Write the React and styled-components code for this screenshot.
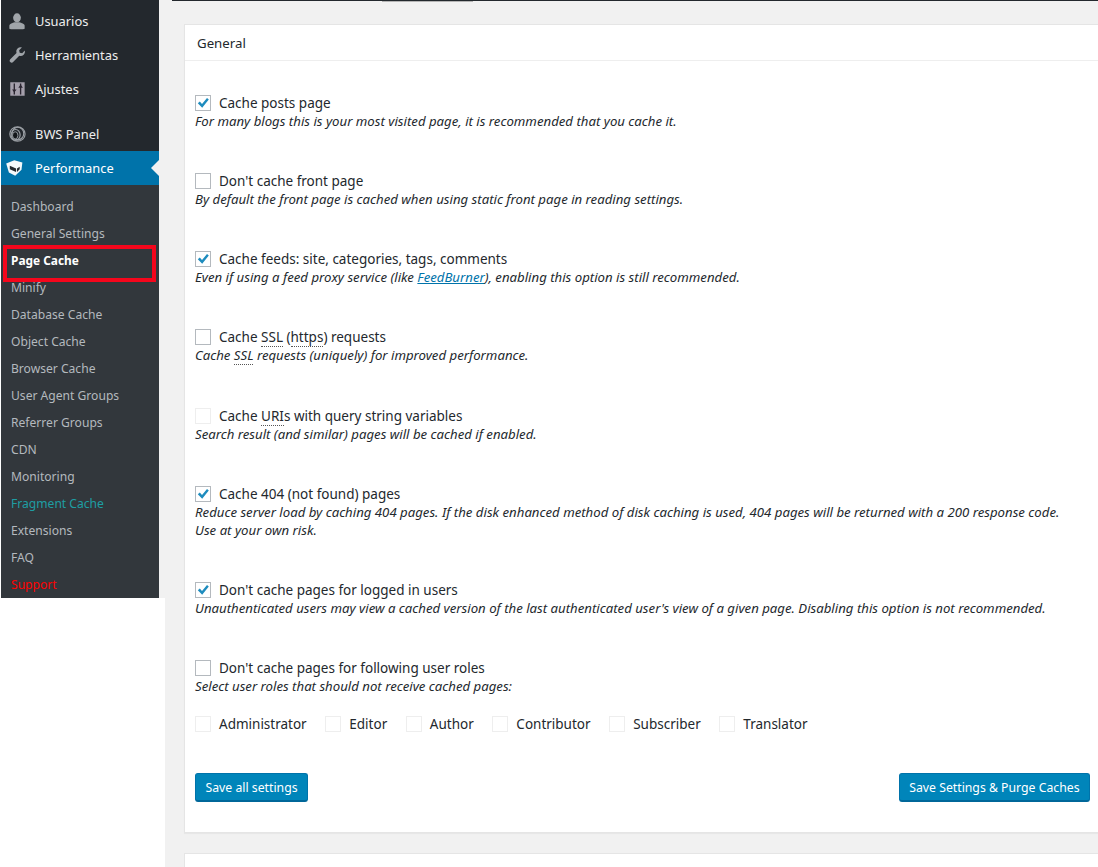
import React from "react";
import styled, { createGlobalStyle } from "styled-components";

const GlobalStyle = createGlobalStyle`
  html, body {
    margin: 0;
    padding: 0;
    background: #fff;
    font-family: "Noto Sans", "Open Sans", sans-serif;
    color: #23282d;
  }
  * { box-sizing: border-box; }
`;

const Page = styled.div`
  width: 1098px;
  height: 867px;
  display: flex;
  overflow: hidden;
  position: relative;
`;

const Sidebar = styled.aside`
  width: 165px;
  padding-left: 1px;
  flex: none;
`;

const SideInner = styled.div`
  width: 158px;
  padding-top: 4px;
  background: #23282d;
  box-shadow: 6px 0 0 #f1f1f1;
`;

const MenuItem = styled.div`
  height: 34px;
  display: flex;
  align-items: center;
  padding-left: 7px;
  gap: 9px;
  position: relative;
  font-size: 12.9px;
  background: ${(p) => (p.$active ? "#0073aa" : "transparent")};
  color: ${(p) => (p.$active ? "#fff" : "#eee")};
  margin-top: ${(p) => p.$gap || 0}px;
`;

const Notch = styled.span`
  position: absolute;
  right: 0;
  top: 9px;
  border: 8px solid transparent;
  border-right-color: #f1f1f1;
  border-left: 0;
`;

const IconBox = styled.svg`
  width: 18px;
  height: 18px;
  flex: none;
  display: block;
  overflow: visible;
`;

const SubMenu = styled.div`
  background: #32373c;
  height: 413px;
  padding-top: 8px;
`;

const SubItem = styled.div`
  height: 27px;
  display: flex;
  align-items: center;
  padding-left: 10px;
  padding-bottom: ${(p) => (p.$current ? "2px" : "0")};
  font-size: ${(p) => (p.$current ? "11.9px" : "12.1px")};
  color: ${(p) => p.$color || "#b4b9be"};
  font-weight: ${(p) => (p.$current ? 700 : 400)};
  position: relative;
`;

const RedFrame = styled.span`
  position: absolute;
  left: 2px;
  top: -2px;
  width: 153px;
  height: 37px;
  border: 4px solid #f5061c;
`;

const Main = styled.main`
  flex: 1;
  min-width: 0;
  background: #f1f1f1;
  padding: 24px 0 0 19px;
  position: relative;
`;

const TopLine = styled.span`
  position: absolute;
  left: 7px;
  right: 0;
  top: 0;
  height: 1px;
  background: #23282d;
`;

const TopTab = styled.span`
  position: absolute;
  left: 217px;
  top: 1px;
  width: 91px;
  height: 1px;
  background: #b5b5b5;
`;

const Card = styled.section`
  width: 930px;
  background: #fff;
  border: 1px solid #e5e5e5;
  border-right: 0;
  box-shadow: 0 1px 1px rgba(0, 0, 0, 0.04);
`;

const CardHead = styled.h2`
  margin: 0;
  height: 36px;
  display: flex;
  align-items: center;
  padding-left: 12px;
  font-size: 13.25px;
  font-weight: 400;
  color: #23282d;
  border-bottom: 1px solid #eee;
`;

const CardBody = styled.div`
  padding: 33px 0 0 10px;
  height: 771px;
`;

const Option = styled.div`
  height: 78px;
  &:nth-child(4) { height: 79px; }
  &:nth-child(6) { height: 96px; }
`;

const LabelRow = styled.div`
  display: flex;
  align-items: center;
  height: 18px;
  gap: 8px;
`;

const Check = styled.span`
  width: 16px;
  height: 16px;
  flex: none;
  border: 1px solid ${(p) => (p.$disabled ? "#eeeeee" : "#b4b9be")};
  background: #fff;
  display: block;
  position: relative;
`;

const Tick = styled.svg`
  position: absolute;
  left: 0;
  top: 0;
  width: 14px;
  height: 14px;
`;

const LabelText = styled.span`
  font-size: 13.5px;
  color: #23282d;
`;

const Abbr = styled.span`
  border-bottom: 1px dotted #555;
`;

const Note = styled.div`
  font-size: 13.2px;
  font-style: italic;
  color: #23282d;
  line-height: 18px;
  width: 870px;
`;

const NoteLink = styled.a`
  color: #0073aa;
  text-decoration: underline;
`;

const Roles = styled.div`
  display: flex;
  margin-top: 20px;
  height: 58px;
`;

const Role = styled.div`
  display: flex;
  align-items: center;
  gap: 8px;
  height: 18px;
  margin-right: 18.6px;
`;

const Actions = styled.div`
  display: flex;
  justify-content: space-between;
  width: 895px;
`;

const Button = styled.button`
  height: 29px;
  padding: 0 9.5px;
  font: inherit;
  font-size: 12.25px;
  color: #fff;
  background: #0085ba;
  border: 1px solid #0073aa;
  border-bottom-width: 2px;
  border-bottom-color: #006799;
  border-radius: 3px;
`;

const NextCard = styled.section`
  width: 930px;
  height: 40px;
  margin-top: 20px;
  background: #fff;
  border: 1px solid #e5e5e5;
  border-right: 0;
`;

const options = [
  { checked: true, label: "Cache posts page", note: "For many blogs this is your most visited page, it is recommended that you cache it." },
  { label: "Don't cache front page", note: "By default the front page is cached when using static front page in reading settings." },
  {
    checked: true,
    label: "Cache feeds: site, categories, tags, comments",
    note: (
      <>
        Even if using a feed proxy service (like <NoteLink href="#">FeedBurner</NoteLink>), enabling this option is still recommended.
      </>
    ),
  },
  {
    label: (
      <>
        Cache <Abbr>SSL</Abbr> (<Abbr>https</Abbr>) requests
      </>
    ),
    note: (
      <>
        Cache <Abbr>SSL</Abbr> requests (uniquely) for improved performance.
      </>
    ),
  },
  {
    disabled: true,
    label: (
      <>
        Cache <Abbr>URI</Abbr>s with query string variables
      </>
    ),
    note: "Search result (and similar) pages will be cached if enabled.",
  },
  {
    checked: true,
    label: "Cache 404 (not found) pages",
    note: "Reduce server load by caching 404 pages. If the disk enhanced method of disk caching is used, 404 pages will be returned with a 200 response code. Use at your own risk.",
  },
  { checked: true, label: "Don't cache pages for logged in users", note: "Unauthenticated users may view a cached version of the last authenticated user's view of a given page. Disabling this option is not recommended." },
];

const subItems = [
  { name: "Dashboard" },
  { name: "General Settings" },
  { name: "Page Cache", current: true },
  { name: "Minify" },
  { name: "Database Cache" },
  { name: "Object Cache" },
  { name: "Browser Cache" },
  { name: "User Agent Groups" },
  { name: "Referrer Groups" },
  { name: "CDN" },
  { name: "Monitoring" },
  { name: "Fragment Cache", color: "#1e9ea3" },
  { name: "Extensions" },
  { name: "FAQ" },
  { name: "Support", color: "#ff0000" },
];

const roles = ["Administrator", "Editor", "Author", "Contributor", "Subscriber", "Translator"];

const UserIcon = () => (
  <IconBox viewBox="0 0 20 20">
    <ellipse cx="10" cy="6.500" rx="4.300" ry="5" fill="#a0a5aa" />
    <path fill="#a0a5aa" d="M1.500 18.500v-3.200c0-2 3.500-3.100 6-3.800h5c2.500.7 6 1.800 6 3.800v3.200c-1 .6-2.500.7-4 .7H5.500c-1.500 0-3-.1-4-.7z" />
  </IconBox>
);

const WrenchIcon = () => (
  <IconBox viewBox="0 0 20 20">
    <path fill="#a0a5aa" d="M18.600 4.900c.5 1.700.1 3.500-1.200 4.800-1.300 1.300-3.200 1.700-4.900 1.100L5.700 17.800c-.9.900-2.300.9-3.200 0s-.9-2.300 0-3.200l7-6.900c-.6-1.700-.2-3.600 1.100-4.900 1.300-1.300 3.100-1.700 4.800-1.200l-3 3 .6 2.800 2.800.6 2.800-3.100z" />
  </IconBox>
);

const SlidersIcon = () => (
  <IconBox viewBox="0 0 20 20">
    <path fill="#a49fab" d="M2.500 2.500h16v15h-16z" />
    <path stroke="#2a2530" strokeWidth="1.500" fill="none" d="M7 4v12M14 4v12" />
    <path fill="#2a2530" d="M4.500 10.500h5L7 14zM11.500 8.500h5L14 5z" />
  </IconBox>
);

const RingsIcon = () => (
  <IconBox viewBox="0 0 20 20">
    <g fill="none" stroke="#9a9fa4" strokeWidth="1.300">
      <ellipse cx="10.500" cy="10" rx="8.500" ry="8" />
      <ellipse cx="11" cy="9.500" rx="6.500" ry="7" />
      <ellipse cx="8.500" cy="11" rx="5" ry="6" />
    </g>
    <ellipse cx="8" cy="11.500" rx="3" ry="4" fill="#14181b" stroke="#9a9fa4" />
  </IconBox>
);

const CubeIcon = () => (
  <IconBox viewBox="0 0 20 20">
    <path fill="#f4f8fa" d="M-2 5L7 1.500 16 4l-1 8-7 6.500L1 15z" />
    <path fill="#23282d" d="M2 7.500l7 3v4l-7-3zM10 10.500l3-2v3l-3 3z" />
  </IconBox>
);

const App = () => (
  <Page>
    <GlobalStyle />
    <Sidebar>
      <SideInner>
        <MenuItem>
          <UserIcon />
          Usuarios
        </MenuItem>
        <MenuItem>
          <WrenchIcon />
          Herramientas
        </MenuItem>
        <MenuItem>
          <SlidersIcon />
          Ajustes
        </MenuItem>
        <MenuItem $gap={11}>
          <RingsIcon />
          BWS Panel
        </MenuItem>
        <MenuItem $active>
          <CubeIcon />
          Performance
          <Notch />
        </MenuItem>
        <SubMenu>
          {subItems.map((item) => (
            <SubItem key={item.name} $color={item.current ? "#fff" : item.color} $current={item.current}>
              {item.name}
              {item.current && <RedFrame />}
            </SubItem>
          ))}
        </SubMenu>
      </SideInner>
    </Sidebar>
    <Main>
      <TopLine />
      <TopTab />
      <Card>
        <CardHead>General</CardHead>
        <CardBody>
          {options.map((o, i) => (
            <Option key={i}>
              <LabelRow>
                <Check $disabled={o.disabled}>
                  {o.checked && (
                    <Tick viewBox="0 0 14 14">
                      <path d="M1.800 7.300l2-1.700 2.200 2.400L11 2l1.800 1.500-6.600 8.300z" fill="#1e8cbe" />
                    </Tick>
                  )}
                </Check>
                <LabelText>{o.label}</LabelText>
              </LabelRow>
              <Note>{o.note}</Note>
            </Option>
          ))}
          <LabelRow>
            <Check />
            <LabelText>Don't cache pages for following user roles</LabelText>
          </LabelRow>
          <Note>Select user roles that should not receive cached pages:</Note>
          <Roles>
            {roles.map((r) => (
              <Role key={r}>
                <Check $disabled />
                <LabelText>{r}</LabelText>
              </Role>
            ))}
          </Roles>
          <Actions>
            <Button>Save all settings</Button>
            <Button>Save Settings &amp; Purge Caches</Button>
          </Actions>
        </CardBody>
      </Card>
      <NextCard />
    </Main>
  </Page>
);

export default App;
